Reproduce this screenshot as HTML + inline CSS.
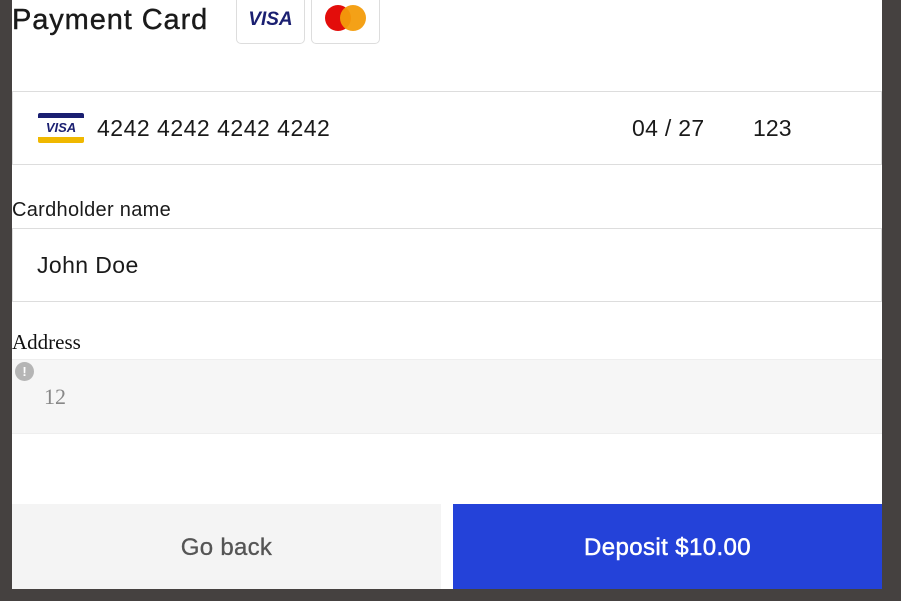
<!DOCTYPE html>
<html><head><style>
body{margin:0;width:901px;height:601px;background:#454140;position:relative;overflow:hidden;font-family:"Liberation Sans",sans-serif}
.p{position:absolute;left:12px;top:0;width:870px;height:589px;background:#fff}
.a{position:absolute}
.box{position:absolute;border:1px solid #ddd;border-radius:5px;background:#fff}
</style></head><body>
<div class="p"></div>
<div class="a" style="left:12px;top:2px;font-size:29px;letter-spacing:0.9px;color:#1a1a1a;line-height:36px;-webkit-text-stroke:0.4px #1a1a1a">Payment Card</div>
<div class="box" style="left:236px;top:-6px;width:67px;height:48px"><div class="a" style="left:0;width:67px;top:14px;text-align:center;color:#1a1f71;font-weight:bold;font-style:italic;font-size:19px">VISA</div></div>
<div class="box" style="left:311px;top:-6px;width:67px;height:48px">
<svg class="a" style="left:12px;top:9px" width="44" height="28"><circle cx="14" cy="14" r="13" fill="#e30d0b"/><circle cx="29" cy="14" r="13" fill="#f39c0b" fill-opacity=".95"/></svg></div>
<div class="a" style="left:12px;top:91px;width:868px;height:72px;border:1px solid #ddd"></div>
<div class="a" style="left:38px;top:113px;width:46px;height:30px;background:#fff">
<div class="a" style="left:0;top:0;width:46px;height:5px;background:#1a1f71;border-radius:2px 2px 0 0"></div>
<div class="a" style="left:0;top:24px;width:46px;height:6px;background:#f0b800;border-radius:0 0 2px 2px"></div>
<div class="a" style="left:0;width:46px;top:7px;text-align:center;color:#1a1f71;font-weight:bold;font-style:italic;font-size:13px">VISA</div></div>
<div class="a" style="left:97px;top:115px;font-size:23px;letter-spacing:0.5px;color:#1a1a1a">4242 4242 4242 4242</div>
<div class="a" style="left:632px;top:115px;font-size:23px;letter-spacing:0.3px;color:#1a1a1a">04 / 27</div>
<div class="a" style="left:753px;top:115px;font-size:23px;letter-spacing:0.1px;color:#1a1a1a">123</div>
<div class="a" style="left:12px;top:199px;font-size:20px;letter-spacing:0.3px;color:#1a1a1a">Cardholder name</div>
<div class="a" style="left:12px;top:228px;width:868px;height:72px;border:1px solid #ddd"></div>
<div class="a" style="left:37px;top:252px;font-size:23px;letter-spacing:0.4px;color:#1a1a1a">John Doe</div>
<div class="a" style="left:12px;top:330px;font-size:21px;font-family:'Liberation Serif',serif;color:#111">Address</div>
<div class="a" style="left:12px;top:359px;width:870px;height:73px;background:#f6f6f6;border-top:1px solid #eee;border-bottom:1px solid #eee"></div>
<div class="a" style="left:15px;top:362px;width:19px;height:19px;border-radius:50%;background:#b5b5b5;color:#fff;font-size:13px;font-weight:bold;text-align:center;line-height:19px">!</div>
<div class="a" style="left:44px;top:384px;font-size:22px;font-family:'Liberation Serif',serif;color:#888">12</div>
<div class="a" style="left:12px;top:504px;width:429px;height:85px;background:#f4f4f4;color:#555;font-size:24px;letter-spacing:0.3px;text-align:center;line-height:87px;-webkit-text-stroke:0.3px #555">Go back</div>
<div class="a" style="left:453px;top:504px;width:429px;height:85px;background:#2442d9;color:#fff;font-size:24px;letter-spacing:0.4px;text-align:center;line-height:87px;-webkit-text-stroke:0.5px #fff">Deposit $10.00</div>
</body></html>
